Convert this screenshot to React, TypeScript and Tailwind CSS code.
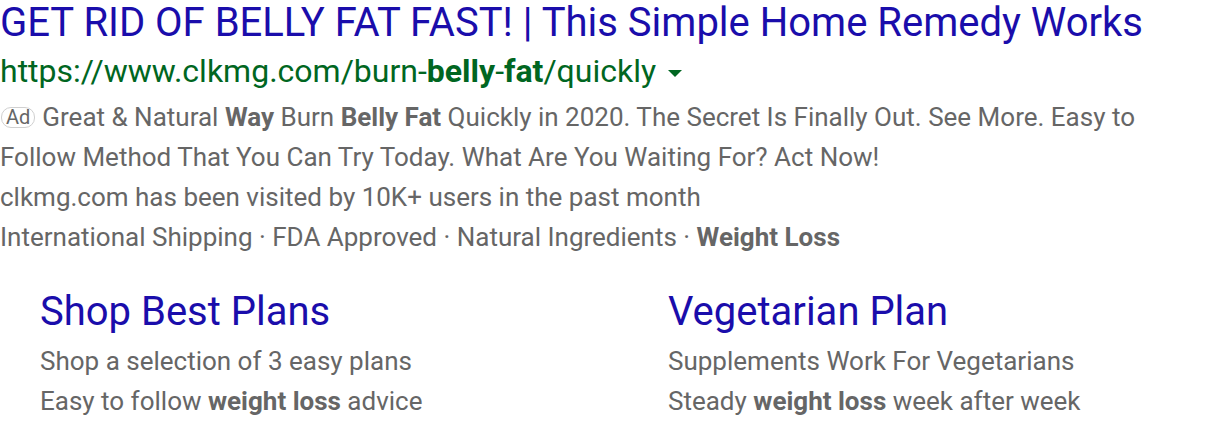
const Sitelink = ({ title, line1, line2 }: { title: string; line1: React.ReactNode; line2: React.ReactNode }) => (
    <div className="flex flex-col">
        <a className="text-[40px] leading-[58px] text-[#1a0dab] whitespace-nowrap">{title}</a>
        <p className="text-[26px] leading-[40px] text-[#666] whitespace-nowrap">{line1}</p>
        <p className="text-[26px] leading-[40px] text-[#666] whitespace-nowrap">{line2}</p>
    </div>
)

const App = () => {
    return (
        <div className="w-[1216px] h-[430px] bg-white overflow-hidden font-['Roboto',sans-serif]">
            <h3 className="text-[40px] leading-[47px] -mt-px text-[#1a0dab] whitespace-nowrap">
                GET RID OF BELLY FAT FAST! | This Simple Home Remedy Works
            </h3>
            <div className="flex items-center gap-3 h-[51px] text-[32px] leading-[51px] text-[#006621] whitespace-nowrap">
                <span>https://www.clkmg.com/burn-<b>belly</b>-<b>fat</b>/quickly</span>
                {/* dropdown caret */}
                <span className="w-0 h-0 mt-1 border-x-[7px] border-x-transparent border-t-[7px] border-t-[#006621]"></span>
            </div>
            <div className="text-[26px] leading-[40px] text-[#666]">
                <p className="whitespace-nowrap">
                    <span className="inline-block align-middle text-[20px] leading-[19px] px-[4px] mr-[7px] -mt-1 ml-px border border-[#d0d0d0] rounded-[10px]">Ad</span>
                    Great &amp; Natural <b>Way</b> Burn <b>Belly Fat</b> Quickly in 2020. The Secret Is Finally Out. See More. Easy to
                </p>
                <p className="whitespace-nowrap">Follow Method That You Can Try Today. What Are You Waiting For? Act Now!</p>
                <p className="whitespace-nowrap">clkmg.com has been visited by 10K+ users in the past month</p>
                <p className="whitespace-nowrap">International Shipping · FDA Approved · Natural Ingredients · <b>Weight Loss</b></p>
            </div>
            <div className="grid grid-cols-[628px_1fr] pl-10 mt-[26px]">
                <Sitelink
                    title="Shop Best Plans"
                    line1="Shop a selection of 3 easy plans"
                    line2={<>Easy to follow <b>weight loss</b> advice</>}
                />
                <Sitelink
                    title="Vegetarian Plan"
                    line1="Supplements Work For Vegetarians"
                    line2={<>Steady <b>weight loss</b> week after week</>}
                />
            </div>
        </div>
    )
}

export default App
